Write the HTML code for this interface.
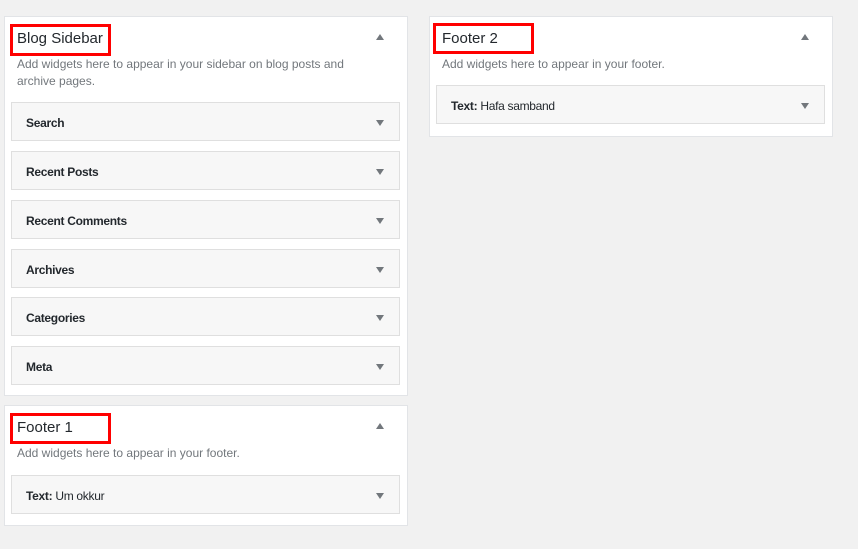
<!DOCTYPE html>
<html><head><style>
body{margin:0;width:858px;height:549px;background:#f1f1f1;font-family:"Liberation Sans",sans-serif;position:relative;overflow:hidden}
.p{position:absolute;background:#fff;border:1px solid #e2e4e7;box-sizing:border-box}
.t{position:absolute;font-size:15px;color:#23282d}
.d{position:absolute;font-size:12px;color:#72777c;line-height:17px}
.w{position:absolute;background:#f7f7f7;border:1px solid #dfdfdf;box-sizing:border-box;height:39px;font-size:12px;color:#23282d}
.w span{position:absolute;left:14px;top:13px;font-weight:600;letter-spacing:-.3px}
.w i,.up{position:absolute;width:0;height:0;border-left:4px solid transparent;border-right:4px solid transparent}
.w i{right:15px;top:17px;border-top:6px solid #72777c}
.up{border-bottom:6px solid #72777c}
.r{position:absolute;border:3px solid #f00;box-sizing:border-box}
</style></head><body>
<div class="p" style="left:4px;top:16px;width:404px;height:380px"></div>
<div class="t" style="left:17px;top:30px">Blog Sidebar</div>
<div class="up" style="left:376px;top:34px"></div>
<div class="d" style="left:17px;top:56px;width:340px">Add widgets here to appear in your sidebar on blog posts and archive pages.</div>
<div class="w" style="left:11px;top:102px;width:389px"><span>Search</span><i></i></div>
<div class="w" style="left:11px;top:151px;width:389px"><span>Recent Posts</span><i></i></div>
<div class="w" style="left:11px;top:200px;width:389px"><span>Recent Comments</span><i></i></div>
<div class="w" style="left:11px;top:249px;width:389px"><span>Archives</span><i></i></div>
<div class="w" style="left:11px;top:297px;width:389px"><span>Categories</span><i></i></div>
<div class="w" style="left:11px;top:346px;width:389px"><span>Meta</span><i></i></div>
<div class="r" style="left:10px;top:24px;width:101px;height:32px"></div>

<div class="p" style="left:4px;top:405px;width:404px;height:121px"></div>
<div class="t" style="left:17px;top:419px">Footer 1</div>
<div class="up" style="left:376px;top:423px"></div>
<div class="d" style="left:17px;top:445px">Add widgets here to appear in your footer.</div>
<div class="w" style="left:11px;top:475px;width:389px"><span>Text: <b style="font-weight:normal">Um okkur</b></span><i></i></div>
<div class="r" style="left:10px;top:413px;width:101px;height:31px"></div>

<div class="p" style="left:429px;top:16px;width:404px;height:121px"></div>
<div class="t" style="left:442px;top:30px">Footer 2</div>
<div class="up" style="left:801px;top:34px"></div>
<div class="d" style="left:442px;top:56px">Add widgets here to appear in your footer.</div>
<div class="w" style="left:436px;top:85px;width:389px"><span>Text: <b style="font-weight:normal">Hafa samband</b></span><i></i></div>
<div class="r" style="left:433px;top:23px;width:101px;height:31px"></div>
</body></html>
